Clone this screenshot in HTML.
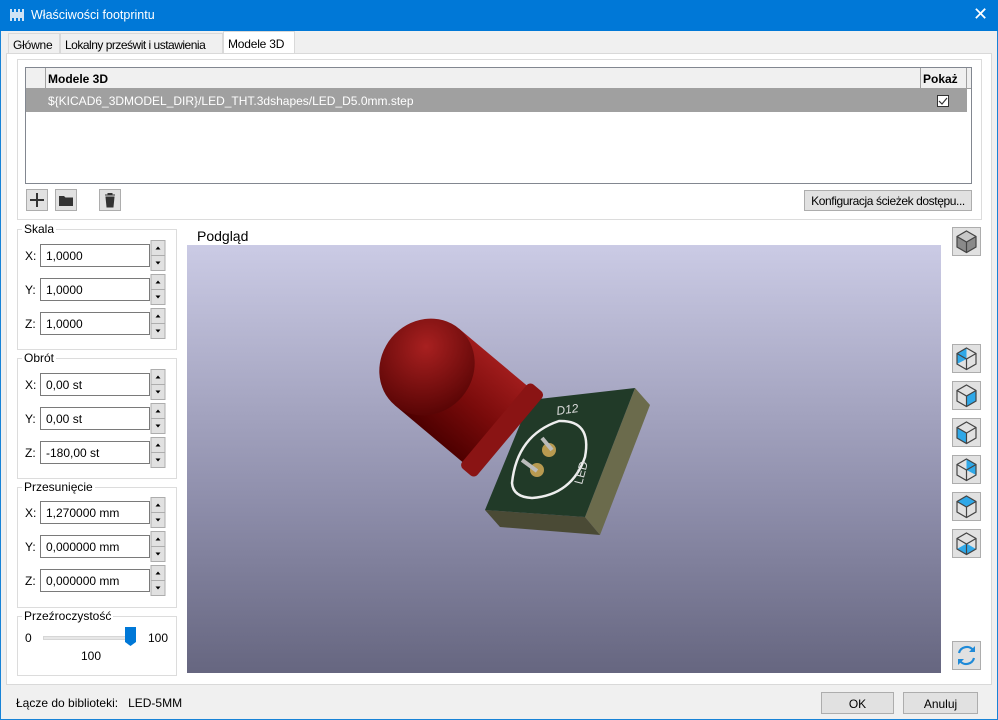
<!DOCTYPE html>
<html><head><meta charset="utf-8"><style>
*{box-sizing:border-box;margin:0;padding:0}
body{width:998px;height:720px;overflow:hidden;background:#f0f0f0;font-family:"Liberation Sans",sans-serif;font-size:12px;color:#000;position:relative}
.abs{position:absolute;white-space:nowrap}
.win{position:absolute;left:0;top:0;width:998px;height:720px;border:1px solid #1883d7}
.title{left:0;top:0;width:998px;height:31px;background:#0078d7;color:#fff;font-size:12px}
.tab{top:33px;height:20px;border:1px solid #d9d9d9;border-bottom:none;background:#f0f0f0;padding:4px 4px 0;font-size:12px;letter-spacing:-0.2px}
.panel{left:6px;top:53px;width:986px;height:632px;background:#fff;border:1px solid #d9d9d9}
.grp{border:1px solid #dcdcdc}
.grpl{background:#fff;padding:0 2px;font-size:12px}
.inp{width:110px;height:23px;border:1px solid #7a7a7a;background:#fff;padding:4px 5px;font-size:12px}
.btn{background:#e1e1e1;border:1px solid #adadad;text-align:center}
.lbl{font-size:12px}
</style></head><body>
<div class="win"></div>
<div class="abs title">
 <svg class="abs" style="left:10px;top:9px" width="14" height="12"><g fill="#cfe3f5"><rect x="0" y="0" width="2" height="12"/><rect x="4" y="0" width="2" height="12"/><rect x="8" y="0" width="2" height="12"/><rect x="12" y="0" width="2" height="12"/><rect x="0" y="3" width="14" height="6"/></g></svg>
 <div class="abs" style="left:31px;top:8px;font-size:12.5px">Właściwości footprintu</div>
 <div class="abs" style="left:973px;top:4px;font-size:18px">✕</div>
</div>
<div class="abs tab" style="left:8px;width:52px">Główne</div>
<div class="abs tab" style="left:60px;width:163px;letter-spacing:-0.5px">Lokalny prześwit i ustawienia</div>
<div class="abs tab" style="left:223px;top:31px;height:23px;width:72px;background:#fff;padding-top:5px">Modele 3D</div>
<div class="abs panel"></div>
<div class="abs grp" style="left:17px;top:59px;width:965px;height:161px"></div>
<div class="abs" style="left:25px;top:67px;width:947px;height:117px;border:1px solid #828790;background:#fff"></div>
<div class="abs" style="left:26px;top:68px;width:945px;height:21px;background:#f0f0f0;border-bottom:1px solid #a0a0a0"></div>
<div class="abs" style="left:45px;top:68px;width:1px;height:21px;background:#a0a0a0"></div>
<div class="abs" style="left:920px;top:68px;width:1px;height:21px;background:#a0a0a0"></div>
<div class="abs" style="left:966px;top:68px;width:1px;height:21px;background:#a0a0a0"></div>
<div class="abs" style="left:48px;top:72px;font-weight:bold">Modele 3D</div>
<div class="abs" style="left:923px;top:72px;font-weight:bold">Pokaż</div>
<div class="abs" style="left:26px;top:89px;width:941px;height:23px;background:#a0a0a0"></div>
<div class="abs" style="left:48px;top:94px;color:#fff">${KICAD6_3DMODEL_DIR}/LED_THT.3dshapes/LED_D5.0mm.step</div>
<div class="abs" style="left:937px;top:95px;width:12px;height:12px;border:1px solid #333;background:#fff"><svg width="10" height="10" class="abs" style="left:0;top:0"><path d="M1 5 L4 8 L9 2" stroke="#333" fill="none" stroke-width="1.2"/></svg></div>
<div class="abs btn" style="left:26px;top:189px;width:22px;height:22px"><svg width="20" height="20"><path d="M10 3V17M3 10H17" stroke="#333" stroke-width="2"/></svg></div>
<div class="abs btn" style="left:55px;top:189px;width:22px;height:22px"><svg width="20" height="20"><path d="M3 6H8L9.5 7.5H17V16H3Z" fill="#333"/></svg></div>
<div class="abs btn" style="left:99px;top:189px;width:22px;height:22px"><svg width="20" height="20"><path d="M5 5H15M8 5V3.5H12V5M6 7H14L13 17H7Z" fill="#333" stroke="#333"/></svg></div>
<div class="abs btn" style="left:804px;top:190px;width:168px;height:21px;padding-top:3px;letter-spacing:-0.4px">Konfiguracja ścieżek dostępu...</div>

<div class="abs grp" style="left:17px;top:229px;width:160px;height:121px"></div>
<div class="abs grpl" style="left:22px;top:222px">Skala</div>
<div class="abs grp" style="left:17px;top:358px;width:160px;height:121px"></div>
<div class="abs grpl" style="left:22px;top:351px">Obrót</div>
<div class="abs grp" style="left:17px;top:487px;width:160px;height:121px"></div>
<div class="abs grpl" style="left:22px;top:480px">Przesunięcie</div>
<div class="abs grp" style="left:17px;top:616px;width:160px;height:60px"></div>
<div class="abs grpl" style="left:22px;top:609px">Przeźroczystość</div>

<div class="abs lbl" style="left:25px;top:249px">X:</div><div class="abs inp" style="left:40px;top:244px">1,0000</div>
<div class="abs lbl" style="left:25px;top:283px">Y:</div><div class="abs inp" style="left:40px;top:278px">1,0000</div>
<div class="abs lbl" style="left:25px;top:317px">Z:</div><div class="abs inp" style="left:40px;top:312px">1,0000</div>
<div class="abs lbl" style="left:25px;top:378px">X:</div><div class="abs inp" style="left:40px;top:373px">0,00 st</div>
<div class="abs lbl" style="left:25px;top:412px">Y:</div><div class="abs inp" style="left:40px;top:407px">0,00 st</div>
<div class="abs lbl" style="left:25px;top:446px">Z:</div><div class="abs inp" style="left:40px;top:441px">-180,00 st</div>
<div class="abs lbl" style="left:25px;top:506px">X:</div><div class="abs inp" style="left:40px;top:501px">1,270000 mm</div>
<div class="abs lbl" style="left:25px;top:540px">Y:</div><div class="abs inp" style="left:40px;top:535px">0,000000 mm</div>
<div class="abs lbl" style="left:25px;top:574px">Z:</div><div class="abs inp" style="left:40px;top:569px">0,000000 mm</div>

<svg class="abs" style="left:150px;top:240px" width="18" height="360">
 <defs><g id="sp"><rect x="1" y="0.5" width="14" height="15" fill="#e1e1e1" stroke="#adadad"/><rect x="1" y="15.5" width="14" height="15" fill="#e1e1e1" stroke="#adadad"/><path d="M5.5 9.5H10.5L8 6.5Z M5.5 21.5H10.5L8 24.5Z" fill="#000"/></g></defs>
 <use href="#sp" y="0"/><use href="#sp" y="34"/><use href="#sp" y="68"/>
 <use href="#sp" y="129"/><use href="#sp" y="163"/><use href="#sp" y="197"/>
 <use href="#sp" y="257"/><use href="#sp" y="291"/><use href="#sp" y="325"/>
</svg>

<div class="abs" style="left:25px;top:631px">0</div>
<div class="abs" style="left:43px;top:636px;width:92px;height:4px;background:#e7e7e7;border:1px solid #d6d6d6"></div>
<svg class="abs" style="left:125px;top:627px" width="12" height="20"><path d="M0 0H11V15L5.5 19L0 15Z" fill="#0078d7"/></svg>
<div class="abs" style="left:148px;top:631px">100</div>
<div class="abs" style="left:81px;top:649px">100</div>

<div class="abs" style="left:197px;top:228px;font-size:14px">Podgląd</div>
<div class="abs" style="left:187px;top:245px;width:754px;height:428px;background:linear-gradient(#cbcbe5,#8e8eab 60%,#666680)"></div>
<svg class="abs" style="left:187px;top:245px" width="754" height="428">
 <defs>
  <linearGradient id="red" x1="0" y1="0" x2="0" y2="1"><stop offset="0" stop-color="#a01c1c"/><stop offset="0.5" stop-color="#7a0b0b"/><stop offset="1" stop-color="#4e0000"/></linearGradient>
  <radialGradient id="dome" cx="0.35" cy="0.35" r="0.7"><stop offset="0" stop-color="#a82020"/><stop offset="1" stop-color="#5a0505"/></radialGradient>
 </defs>
 <polygon points="448,143 398,272 413,290 463,160" fill="#6b6b4c"/>
 <polygon points="398,272 298,265 313,282 413,290" fill="#4a4a35"/>
 <polygon points="343,155 448,143 398,272 298,265" fill="#213a28"/>
 <path d="M325 238 Q330 190 372 176 Q405 175 398 212 Q385 250 345 253 Q326 252 325 238Z" fill="none" stroke="#eee" stroke-width="2.5"/>
 <text x="370" y="170" fill="#ddd" font-size="12" font-style="italic" transform="rotate(-8 370 170)">D12</text>
 <text x="395" y="240" fill="#ddd" font-size="12" transform="rotate(-75 395 240)">LED</text>
 <circle cx="362" cy="205" r="7" fill="#b89a50"/><circle cx="350" cy="225" r="7" fill="#b89a50"/>
 <path d="M355 193 L365 205 M335 215 L350 226" stroke="#bbb" stroke-width="4"/>
 <g transform="translate(240,122) rotate(40)">
  <rect x="0" y="-50" width="95" height="100" fill="url(#red)"/>
  <rect x="88" y="-55" width="20" height="110" rx="5" fill="#8a1414"/>
  <ellipse cx="0" cy="0" rx="46" ry="50" fill="url(#dome)"/>
 </g>
</svg>

<svg class="abs" style="left:952px;top:227px" width="30" height="460">
 <defs>
  <g id="cb"><rect x="0.5" y="0.5" width="28" height="28" fill="#e1e1e1" stroke="#adadad"/></g>
  <path id="hx" d="M14.5 4L24 9.5V20L14.5 25.5L5 20V9.5Z M5 9.5L14.5 15L24 9.5 M14.5 15V25.5" fill="none" stroke="#444" stroke-width="1.2"/>
 </defs>
 <use href="#cb"/><path d="M14.5 4L24 9.5V20L14.5 25.5L5 20V9.5Z" fill="#8a8a8a"/><path d="M14.5 4L24 9.5L14.5 15L5 9.5Z" fill="#c8c8c8"/><use href="#hx"/>
 <g transform="translate(0,117)"><use href="#cb"/><path d="M5 9.5L14.5 4V15L5 20Z" fill="#2fa8e8"/><use href="#hx"/></g>
 <g transform="translate(0,154)"><use href="#cb"/><path d="M14.5 15L24 9.5V20L14.5 25.5Z" fill="#2fa8e8"/><use href="#hx"/></g>
 <g transform="translate(0,191)"><use href="#cb"/><path d="M5 9.5L14.5 15V25.5L5 20Z" fill="#2fa8e8"/><use href="#hx"/></g>
 <g transform="translate(0,228)"><use href="#cb"/><path d="M14.5 4L24 9.5V20L14.5 15Z" fill="#2fa8e8"/><use href="#hx"/></g>
 <g transform="translate(0,265)"><use href="#cb"/><path d="M14.5 4L24 9.5L14.5 15L5 9.5Z" fill="#2fa8e8"/><use href="#hx"/></g>
 <g transform="translate(0,302)"><use href="#cb"/><path d="M5 20L14.5 14.5L24 20L14.5 25.5Z" fill="#2fa8e8"/><use href="#hx"/></g>
 <g transform="translate(0,414)"><use href="#cb"/><path d="M7 12A8 8 0 0 1 21 9 M22 17A8 8 0 0 1 8 20" fill="none" stroke="#1f8ad8" stroke-width="2.2"/><path d="M23 5V11H17Z M6 24V18H12Z" fill="#1f8ad8"/></g>
</svg>

<div class="abs" style="left:16px;top:696px">Łącze do biblioteki:&nbsp;&nbsp;&nbsp;LED-5MM</div>
<div class="abs btn" style="left:821px;top:692px;width:73px;height:22px;padding-top:4px">OK</div>
<div class="abs btn" style="left:903px;top:692px;width:75px;height:22px;padding-top:4px">Anuluj</div>
</body></html>
